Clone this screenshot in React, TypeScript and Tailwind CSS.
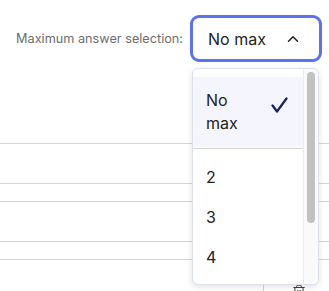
// Max answer selection dropdown, opened over a question table.

import { ChevronUp, Trash2 } from "lucide-react";

const options = ["2", "3", "4"];

function Rows() {
  return (
    <div className="mt-[81px] border-t border-[#d4d4d4]">
      <div className="h-[40px] border-b border-[#d4d4d4]" />
      <div className="h-[18px] border-b border-[#d4d4d4]" />
      <div className="h-[40px] border-b border-[#d4d4d4]" />
      <div className="h-[18px] border-b border-[#d4d4d4]" />
      <div className="flex h-[40px] pt-[21px]">
        <div className="ml-[263px] h-full border-l border-[#d4d4d4]" />
        <Trash2 className="ml-[28px] mt-[3px] h-[14px] w-[14px] text-[#333]" strokeWidth={1.6} />
      </div>
    </div>
  );
}

function Menu() {
  return (
    <div className="absolute left-[192px] top-[68px] flex h-[217px] w-[127px] overflow-hidden rounded-[6px] border border-[#dde0ee] bg-white shadow-[0_2px_6px_rgba(0,0,0,0.12)]">
      <div className="flex-1 py-2 text-[16px] text-[#222]">
        <div className="flex items-start justify-between bg-[#f5f6fd] py-[12px] pl-[13px] pr-[15px] leading-[23px]">
          <span className="w-[40px]">No max</span>
          <svg viewBox="0 0 17 16" className="mt-[8px] h-[16px] w-[17px]" fill="none" stroke="#1b1f5c" strokeWidth={2.2} strokeLinecap="round" strokeLinejoin="round">
            <path d="M1.5 8.5 L6 14.5 L15.5 1.5" />
          </svg>
        </div>
        <div className="mt-px border-t border-[#d4d4d4] pt-2">
          {options.map((o) => (
            <div key={o} className="flex h-[40px] items-center pl-[13px]">
              {o}
            </div>
          ))}
        </div>
      </div>
      <div className="w-[15px] border-l border-[#ececec] bg-[#fafafa] pt-[3px]">
        <div className="ml-[3px] h-[151px] w-[8px] rounded-full bg-[#c1c1c1]" />
      </div>
    </div>
  );
}

export default function App() {
  return (
    <div className="relative h-[291px] w-[329px] overflow-hidden bg-white font-['Inter',sans-serif]">
      <div className="flex items-center justify-end gap-[7px] pr-[7px] pt-[15px]">
        <span className="text-[12.7px] text-[#6e6e6e]">Maximum answer selection:</span>
        <div className="flex h-[47px] w-[132px] items-center justify-between rounded-[9px] border-[3px] border-[#5b72f3] pl-[15px] pr-[17px] text-[16px] text-[#222]">
          <span>No max</span>
          <ChevronUp className="h-[18px] w-[18px] text-[#222]" strokeWidth={2} />
        </div>
      </div>
      <Rows />
      <Menu />
    </div>
  );
}
